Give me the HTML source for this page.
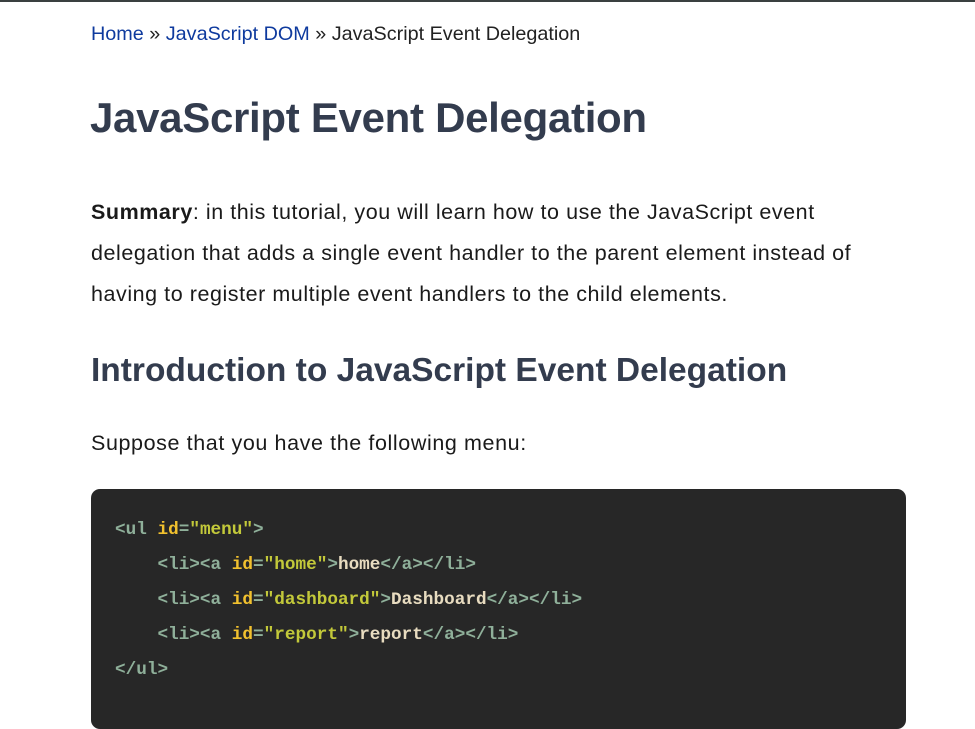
<!DOCTYPE html>
<html><head><meta charset="utf-8"><style>
body{margin:0;width:975px;height:702px;overflow:hidden;background:#fff;border-top:2px solid #3a4040;box-sizing:border-box;font-family:"Liberation Sans",sans-serif;color:#111;}
.bc{position:absolute;left:91px;top:23px;font-size:19.8px;color:#222;white-space:nowrap}
.bc a{color:#0e3a9e;text-decoration:none}
h1{position:absolute;left:90px;top:94px;margin:0;font-size:42px;font-weight:bold;color:#333c4e;white-space:nowrap;letter-spacing:-0.3px}
.p{position:absolute;left:91px;top:192px;font-size:21.5px;line-height:41px;white-space:nowrap;color:#1a1a1a;letter-spacing:0.55px}
h2{position:absolute;left:91px;top:352px;margin:0;font-size:33.5px;font-weight:bold;color:#333c4e;white-space:nowrap;letter-spacing:0px}
.p2{position:absolute;left:91px;top:431px;font-size:21.5px;letter-spacing:0.6px;color:#1a1a1a}
pre{position:absolute;left:91px;top:489px;width:815px;height:240px;margin:0;background:#272727;border-radius:9px;box-sizing:border-box;padding:24px 0 0 24px;font-family:"Liberation Mono",monospace;font-size:17.7px;line-height:35px;font-weight:bold;color:#e8dcc0}
.t{color:#8fb09a}.a{color:#f2c12e}.s{color:#c3c93a}
</style></head><body>
<div class="bc"><a>Home</a> » <a>JavaScript DOM</a> » JavaScript Event Delegation</div>
<h1>JavaScript Event Delegation</h1>
<div class="p"><b>Summary</b>: in this tutorial, you will learn how to use the JavaScript event<br>delegation that adds a single event handler to the parent element instead of<br>having to register multiple event handlers to the child elements.</div>
<h2>Introduction to JavaScript Event Delegation</h2>
<div class="p2">Suppose that you have the following menu:</div>
<pre><span class="t">&lt;ul</span> <span class="a">id</span><span class="t">=</span><span class="s">"menu"</span><span class="t">&gt;</span>
    <span class="t">&lt;li&gt;&lt;a</span> <span class="a">id</span><span class="t">=</span><span class="s">"home"</span><span class="t">&gt;</span>home<span class="t">&lt;/a&gt;&lt;/li&gt;</span>
    <span class="t">&lt;li&gt;&lt;a</span> <span class="a">id</span><span class="t">=</span><span class="s">"dashboard"</span><span class="t">&gt;</span>Dashboard<span class="t">&lt;/a&gt;&lt;/li&gt;</span>
    <span class="t">&lt;li&gt;&lt;a</span> <span class="a">id</span><span class="t">=</span><span class="s">"report"</span><span class="t">&gt;</span>report<span class="t">&lt;/a&gt;&lt;/li&gt;</span>
<span class="t">&lt;/ul&gt;</span></pre>
</body></html>
